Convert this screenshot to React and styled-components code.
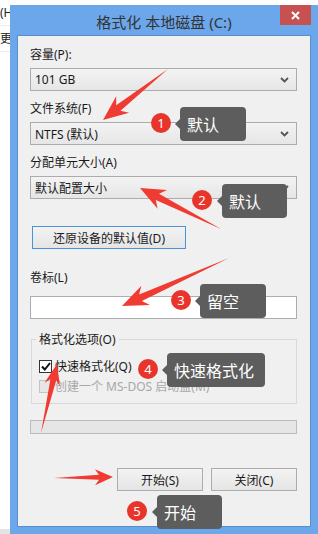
import React from 'react'
import styled, { createGlobalStyle } from 'styled-components'

const GlobalStyle = createGlobalStyle`
  body {
    margin: 0;
    background: #fff;
    font-family: "Noto Sans", "Noto Sans CJK SC", sans-serif;
  }
`

const Screen = styled.div`
  position: relative;
  display: flex;
  width: 318px;
  height: 534px;
  overflow: hidden;
  background: #fff;
`

const BehindStrip = styled.div`
  width: 10px;
  flex-shrink: 0;
  display: flex;
  flex-direction: column;
  overflow: hidden;
  font-size: 12px;
  color: #222;
  white-space: nowrap;
`

const BehindRow = styled.div`
  height: 25px;
  line-height: 25px;
  border-bottom: 1px solid #ececec;
`

const BehindFill = styled.div`
  flex: 1;
`

const BehindBar = styled.div`
  height: 5px;
  background: #e4e4e4;
`

const Window = styled.div`
  width: 308px;
  height: 529px;
  margin-top: 5px;
  box-sizing: border-box;
  padding: 0 7px 7px;
  background: #6ca7ec;
  display: flex;
  flex-direction: column;
`

const TitleBar = styled.div`
  height: 30px;
  flex-shrink: 0;
  display: grid;
  grid-template-columns: 1fr auto 1fr;
`

const Title = styled.div`
  grid-column: 2;
  padding-top: 7px;
  font-size: 15px;
  line-height: 20px;
  color: #333;
  white-space: nowrap;
`

const CloseButton = styled.div`
  grid-column: 3;
  justify-self: end;
  width: 31px;
  height: 20px;
  background: #c75050;
  display: flex;
  align-items: center;
  justify-content: center;
`

const Client = styled.div`
  flex: 1;
  box-sizing: border-box;
  border: 1px solid #5a8ccc;
  background: #f0f0f0;
  padding: 11px 13px 0 12px;
  display: flex;
  flex-direction: column;
`

const Label = styled.div`
  font-size: 12px;
  line-height: 16px;
  color: #1a1a1a;
  margin-top: ${p => p.$mt || 0}px;
`

const Select = styled.div`
  height: 23px;
  margin-top: ${p => p.$mt || 5}px;
  box-sizing: border-box;
  border: 1px solid #acacac;
  background: linear-gradient(#f3f3f3, #e6e6e6);
  padding: 0 7px 0 4px;
  display: flex;
  align-items: center;
  justify-content: space-between;
  font-size: 12px;
  color: #1a1a1a;
`

const Button = styled.div`
  height: 23px;
  width: ${p => p.$w}px;
  box-sizing: border-box;
  border: 1px solid ${p => (p.$focus ? '#4a93d6' : '#adadad')};
  background: linear-gradient(#f3f3f3, #e5e5e5);
  display: flex;
  align-items: center;
  justify-content: center;
  font-size: 12px;
  color: #1a1a1a;
`

const RestoreButton = styled(Button)`
  margin: 27px 0 0 2px;
`

const TextInput = styled.div`
  height: 23px;
  margin-top: 10px;
  box-sizing: border-box;
  border: 1px solid #abadb3;
  background: #fff;
`

const GroupBox = styled.div`
  height: 65px;
  margin: 20px 0 0 1px;
  box-sizing: border-box;
  border: 1px solid #d9d9d9;
  display: flex;
  flex-direction: column;
  padding-left: 7px;
`

const Legend = styled.div`
  align-self: flex-start;
  margin: -8px 0 0 -3px;
  padding: 0 3px;
  background: #f0f0f0;
  font-size: 12px;
  line-height: 16px;
  color: #1a1a1a;
`

const CheckRow = styled.div`
  display: flex;
  align-items: center;
  gap: 3px;
  height: 16px;
  margin-top: ${p => p.$mt}px;
  font-size: 12px;
  color: ${p => (p.$disabled ? '#a8a8a8' : '#1a1a1a')};
  white-space: nowrap;
`

const CheckBox = styled.div`
  width: 13px;
  height: 13px;
  box-sizing: border-box;
  border: 1px solid ${p => (p.$disabled ? '#c4c4c4' : '#333')};
  background: ${p => (p.$disabled ? '#e6e6e6' : '#fff')};
  display: flex;
  align-items: center;
  justify-content: center;
`

const Progress = styled.div`
  height: 14px;
  margin-top: 16px;
  box-sizing: border-box;
  border: 1px solid #bcbcbc;
  background: #e6e6e6;
`

const ButtonRow = styled.div`
  display: flex;
  justify-content: flex-end;
  gap: 8px;
  margin-top: 34px;
`

const Overlay = styled.div`
  position: absolute;
  inset: 0;
  pointer-events: none;
`

const ArrowLayer = styled.svg`
  position: absolute;
  left: 0;
  top: 0;
`

const Badge = styled.div`
  position: absolute;
  left: ${p => p.$x}px;
  top: ${p => p.$y}px;
  width: 20px;
  height: 20px;
  border-radius: 50%;
  background: #e8352c;
  color: #fff;
  font-size: 13px;
  line-height: 20px;
  text-align: center;
`

const Tip = styled.div`
  position: absolute;
  left: ${p => p.$x}px;
  top: ${p => p.$y}px;
  width: ${p => p.$w}px;
  height: 34px;
  box-sizing: border-box;
  padding-left: 7px;
  border-radius: 4px;
  background: #5d5d5d;
  color: #fff;
  font-family: "Noto Sans CJK SC", sans-serif;
  font-size: 16px;
  line-height: 34px;
  white-space: nowrap;

  &::before {
    content: '';
    position: absolute;
    left: -5px;
    top: 12px;
    border-top: 5px solid transparent;
    border-bottom: 5px solid transparent;
    border-right: 5px solid #5d5d5d;
  }
`

const Chevron = () => (
  <svg width="9" height="6" viewBox="0 0 9 6">
    <path d="M1 1 L4.5 4.5 L8 1" fill="none" stroke="#555" strokeWidth="1.8" />
  </svg>
)

const CloseIcon = () => (
  <svg width="9" height="9" viewBox="0 0 9 9">
    <path d="M1 1 L8 8 M8 1 L1 8" stroke="#fff" strokeWidth="2" />
  </svg>
)

const Tick = ({ color }) => (
  <svg width="10" height="9" viewBox="0 0 10 9">
    <path d="M1 4.5 L3.8 7.5 L9 1" fill="none" stroke={color} strokeWidth="2" />
  </svg>
)

function arrowPoints([x1, y1], [x2, y2], headLen, headW, shaftW) {
  const len = Math.hypot(x2 - x1, y2 - y1)
  const ux = (x2 - x1) / len
  const uy = (y2 - y1) / len
  const nx = -uy
  const ny = ux
  const notch = [x2 - ux * headLen * 0.78, y2 - uy * headLen * 0.78]
  const barb = [x2 - ux * headLen, y2 - uy * headLen]
  const pts = [
    [x1, y1],
    [notch[0] + nx * shaftW / 2, notch[1] + ny * shaftW / 2],
    [barb[0] + nx * headW / 2, barb[1] + ny * headW / 2],
    [x2, y2],
    [barb[0] - nx * headW / 2, barb[1] - ny * headW / 2],
    [notch[0] - nx * shaftW / 2, notch[1] - ny * shaftW / 2],
  ]
  return pts.map(p => p.map(v => v.toFixed(1)).join(',')).join(' ')
}

const arrows = [
  { from: [168, 69], to: [103, 120], head: 25, w: 21, s: 7 },
  { from: [221, 229], to: [140, 188], head: 25, w: 21, s: 7 },
  { from: [229, 258], to: [122, 306], head: 26, w: 21, s: 7 },
  { from: [41, 433], to: [57, 364], head: 21, w: 16, s: 6 },
  { from: [54, 478], to: [113, 477], head: 18, w: 16, s: 5 },
]

const notes = [
  { n: 1, bx: 151, by: 113, tx: 180, ty: 107, w: 66, text: '默认' },
  { n: 2, bx: 192, by: 190, tx: 222, ty: 184, w: 65, text: '默认' },
  { n: 3, bx: 171, by: 290, tx: 200, ty: 284, w: 66, text: '留空' },
  { n: 4, bx: 138, by: 359, tx: 167, ty: 353, w: 98, text: '快速格式化' },
  { n: 5, bx: 127, by: 501, tx: 157, ty: 495, w: 65, text: '开始' },
]

export default function App() {
  return (
    <>
      <GlobalStyle />
      <Screen>
        <BehindStrip>
          <BehindRow>(H</BehindRow>
          <BehindRow>更</BehindRow>
          <BehindFill />
          <BehindBar />
        </BehindStrip>

        <Window>
          <TitleBar>
            <Title>格式化 本地磁盘 (C:)</Title>
            <CloseButton><CloseIcon /></CloseButton>
          </TitleBar>
          <Client>
            <Label>容量(P):</Label>
            <Select>101 GB<Chevron /></Select>
            <Label $mt={10}>文件系统(F)</Label>
            <Select>NTFS (默认)<Chevron /></Select>
            <Label $mt={10}>分配单元大小(A)</Label>
            <Select>默认配置大小<Chevron /></Select>
            <RestoreButton $w={154} $focus>还原设备的默认值(D)</RestoreButton>
            <Label $mt={21}>卷标(L)</Label>
            <TextInput />
            <GroupBox>
              <Legend>格式化选项(O)</Legend>
              <CheckRow $mt={10}>
                <CheckBox><Tick color="#111" /></CheckBox>
                快速格式化(Q)
              </CheckRow>
              <CheckRow $mt={4} $disabled>
                <CheckBox $disabled />
                创建一个 MS-DOS 启动盘(M)
              </CheckRow>
            </GroupBox>
            <Progress />
            <ButtonRow>
              <Button $w={86}>开始(S)</Button>
              <Button $w={86}>关闭(C)</Button>
            </ButtonRow>
          </Client>
        </Window>

        <Overlay>
          <ArrowLayer width="318" height="534">
            {arrows.map((a, i) => (
              <polygon key={i} points={arrowPoints(a.from, a.to, a.head, a.w, a.s)} fill="#f03b32" />
            ))}
          </ArrowLayer>
          {notes.map(n => (
            <React.Fragment key={n.n}>
              <Badge $x={n.bx} $y={n.by}>{n.n}</Badge>
              <Tip $x={n.tx} $y={n.ty} $w={n.w}>{n.text}</Tip>
            </React.Fragment>
          ))}
        </Overlay>
      </Screen>
    </>
  )
}
